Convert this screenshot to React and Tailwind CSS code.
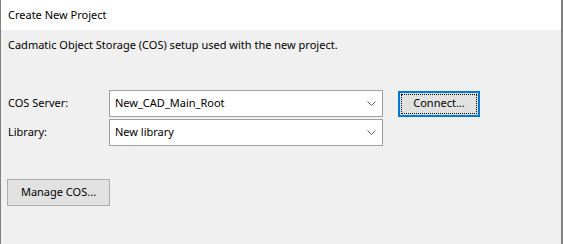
import React from 'react';

const Chevron = () => (
  <svg width="9" height="5" viewBox="0 0 9 5" className="text-[#606060]">
    <path d="M0.5 0.5 L4.5 4.5 L8.5 0.5" fill="none" stroke="currentColor" strokeWidth="1" />
  </svg>
);

const Combo = ({ value }) => (
  <div className="flex h-[27px] w-[274px] items-center justify-between border border-[#a0a0a0] bg-white pl-[5px] pr-[6px]">
    <span className="text-black">{value}</span>
    <Chevron />
  </div>
);

const App = () => {
  return (
    <div
      className="flex h-[244px] w-[563px] flex-col border-l border-r-2 border-[#808080] bg-[#f0f0f0] text-[11px] text-black"
      style={{ fontFamily: '"Noto Sans", "Liberation Sans", sans-serif' }}
    >
      <div className="flex h-[30px] items-center bg-white pl-[7px]">
        Create New Project
      </div>
      <div className="pl-[7px] pt-[7px]">
        Cadmatic Object Storage (COS) setup used with the new project.
      </div>
      <div className="mt-[36px] flex items-start pl-[7px]">
        <div className="flex w-[101px] flex-col">
          <div className="flex h-[27px] items-center">COS Server:</div>
          <div className="mt-[2px] flex h-[27px] items-center">Library:</div>
        </div>
        <div className="flex flex-col gap-[2px]">
          <Combo value="New_CAD_Main_Root" />
          <Combo value="New library" />
        </div>
        <button className="ml-[15px] mt-[1px] flex h-[26px] w-[82px] items-center justify-center border-2 border-[#0078d7] bg-[#e1e1e1] p-[1px]">
          <span className="flex h-full w-full items-center justify-center border border-dotted border-black">
            Connect...
          </span>
        </button>
      </div>
      <div className="mt-[33px] pl-[6px]">
        <button className="flex h-[27px] w-[103px] items-center justify-center border border-[#adadad] bg-[#e1e1e1]">
          Manage COS...
        </button>
      </div>
    </div>
  );
};

export default App;
